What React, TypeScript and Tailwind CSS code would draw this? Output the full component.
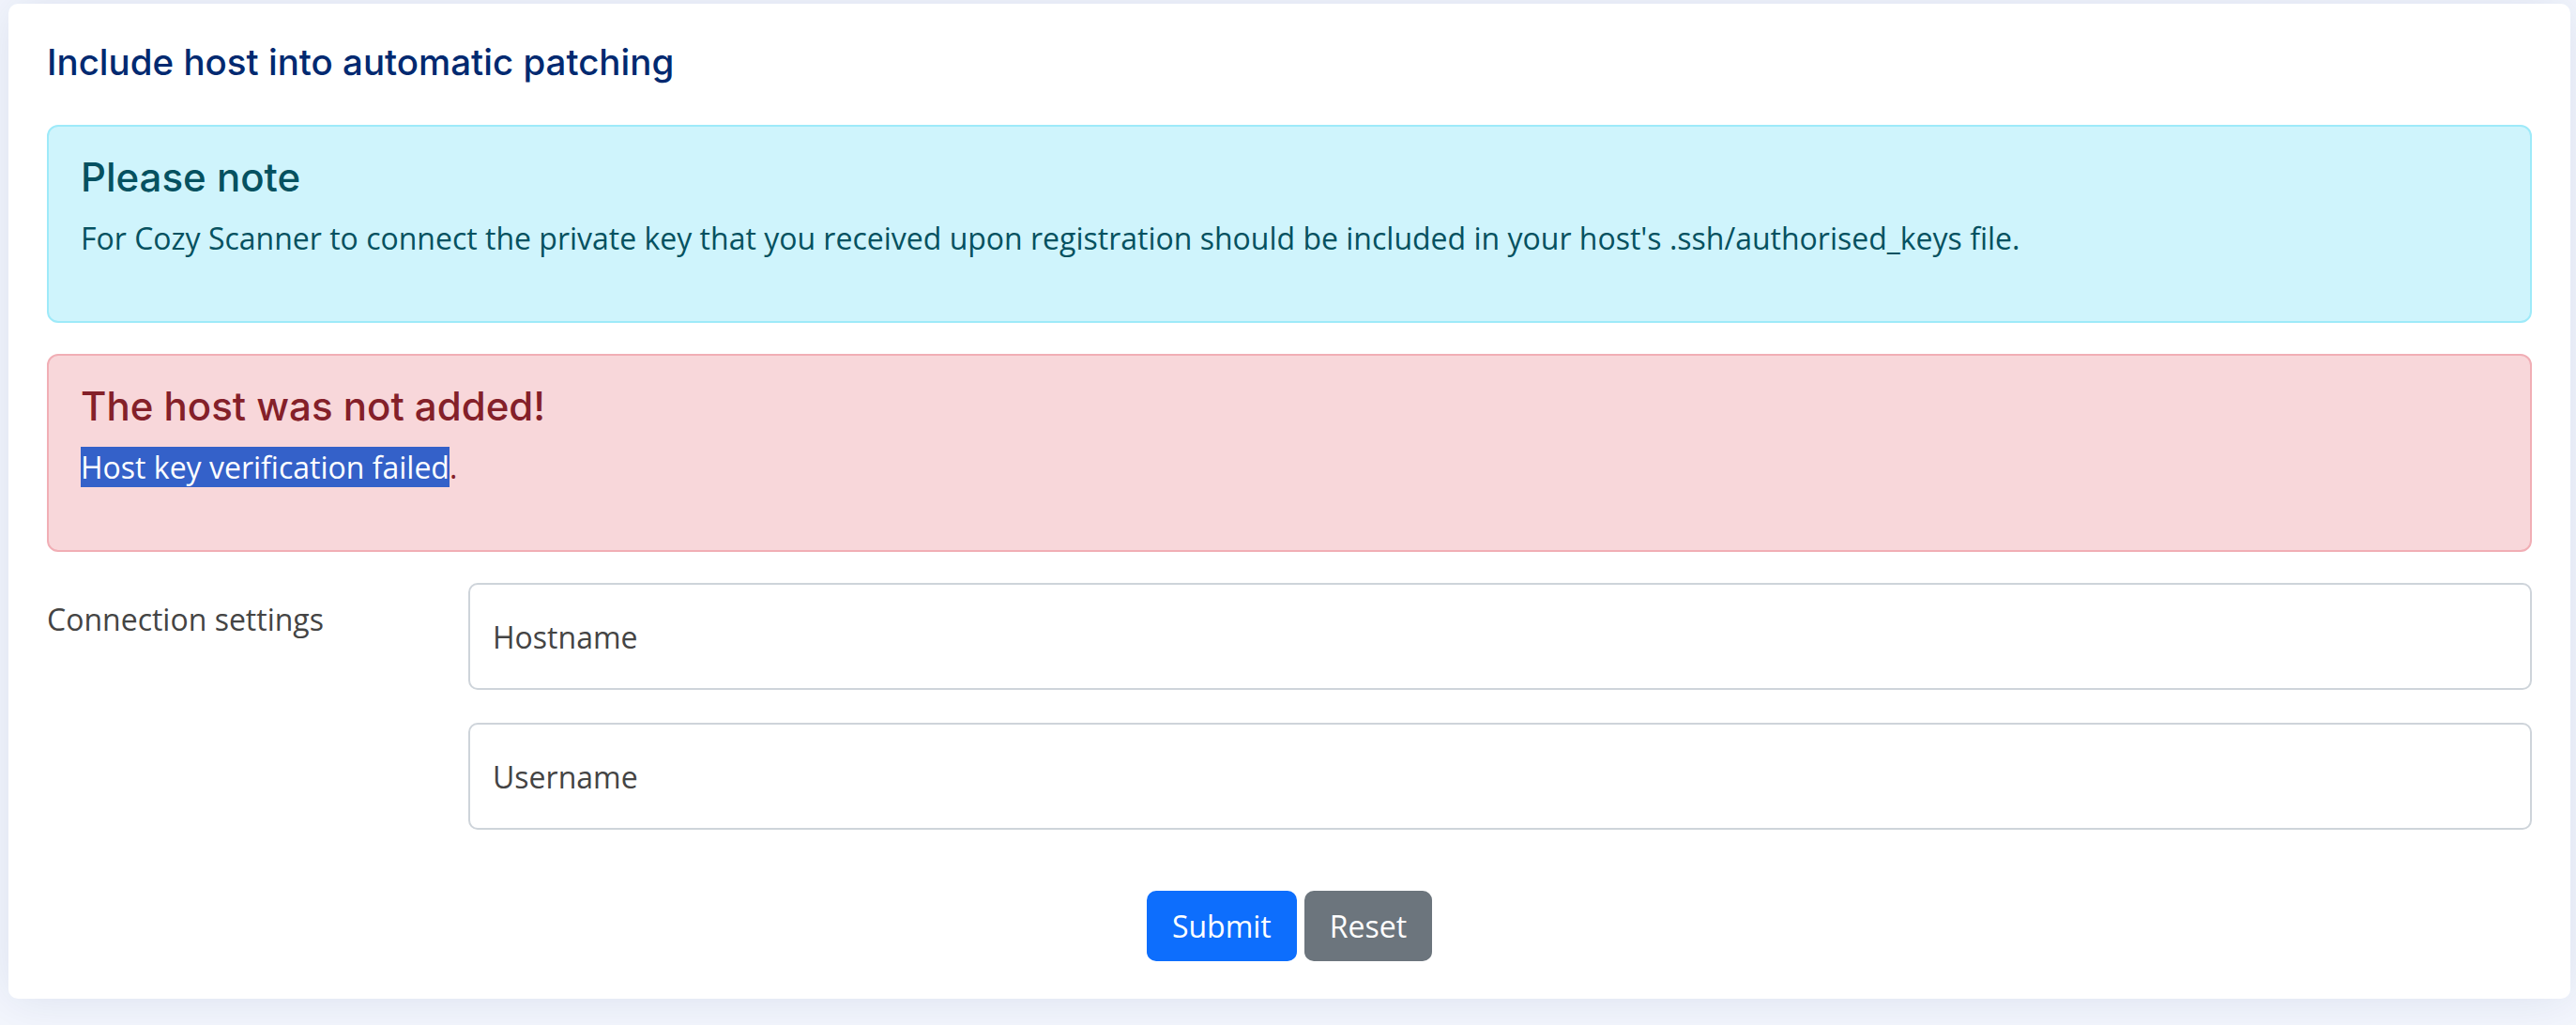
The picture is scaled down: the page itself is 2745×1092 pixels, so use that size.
import { useState } from "react";

const heading = "font-['Inter',sans-serif] font-medium";
const body = "font-['Open_Sans',sans-serif]";

function Alert({
  tone,
  title,
  children,
}: {
  tone: "info" | "danger";
  title: string;
  children: React.ReactNode;
}) {
  const box =
    tone === "info"
      ? "border-[#9eeaf9] bg-[#cff4fc] text-[#055160]"
      : "border-[#f1aeb5] bg-[#f8d7da] text-[#842029]";
  return (
    <div className={`rounded-[12px] border-2 px-[34px] pt-[29px] pb-[65px] ${box}`}>
      <h4 className={`${heading} text-[42px] leading-[50px]`}>{title}</h4>
      <p className={`${body} mt-[16px] text-[32px] leading-[47px]`}>{children}</p>
    </div>
  );
}

export default function App() {
  const [host, setHost] = useState("");
  const [user, setUser] = useState("");

  return (
    <div className="min-h-screen bg-[#f3f6fd] pt-[4px] pr-[6px] pl-[9px]">
      <div className="rounded-[10px] bg-white px-[41px] pb-[40px] shadow-[0_0_52px_rgba(1,41,112,0.1)]">
        {/* TITLE */}
        <h5 className={`${heading} pt-[41px] text-[38.5px] leading-[43px] text-[#012970]`}>
          Include host into automatic patching
        </h5>

        {/* ALERTS */}
        <div className="mt-[45px] flex flex-col gap-[33px]">
          <Alert tone="info" title="Please note">
            For Cozy Scanner to connect the private key that you received upon registration should be
            included in your host's .ssh/authorised_keys file.
          </Alert>
          <Alert tone="danger" title="The host was not added!">
            <span className="bg-[#3461c9] text-white">Host key verification failed</span>.
          </Alert>
        </div>

        {/* FORM */}
        <div className={`${body} mt-[33px] flex`}>
          <label className="w-[449px] shrink-0 pt-[15px] text-[32px] leading-[47px] text-[#444444]">
            Connection settings
          </label>
          <div className="flex flex-1 flex-col gap-[35px]">
            <input
              value={host}
              onChange={(e) => setHost(e.target.value)}
              placeholder="Hostname"
              className="h-[114px] w-full rounded-[10px] border-2 border-[#ced4da] bg-white px-[24px] text-[32px] text-[#212529] placeholder:text-[#444444] outline-none"
            />
            <input
              value={user}
              onChange={(e) => setUser(e.target.value)}
              placeholder="Username"
              className="h-[114px] w-full rounded-[10px] border-2 border-[#ced4da] bg-white px-[24px] text-[32px] text-[#212529] placeholder:text-[#444444] outline-none"
            />
          </div>
        </div>

        {/* BUTTONS */}
        <div className={`${body} mt-[65px] flex justify-center gap-[8px]`}>
          <button className="h-[75px] rounded-[10px] bg-[#0d6efd] px-[27px] text-[32px] text-white">
            Submit
          </button>
          <button className="h-[75px] rounded-[10px] bg-[#6c757d] px-[27px] text-[32px] text-white">
            Reset
          </button>
        </div>
      </div>
    </div>
  );
}
